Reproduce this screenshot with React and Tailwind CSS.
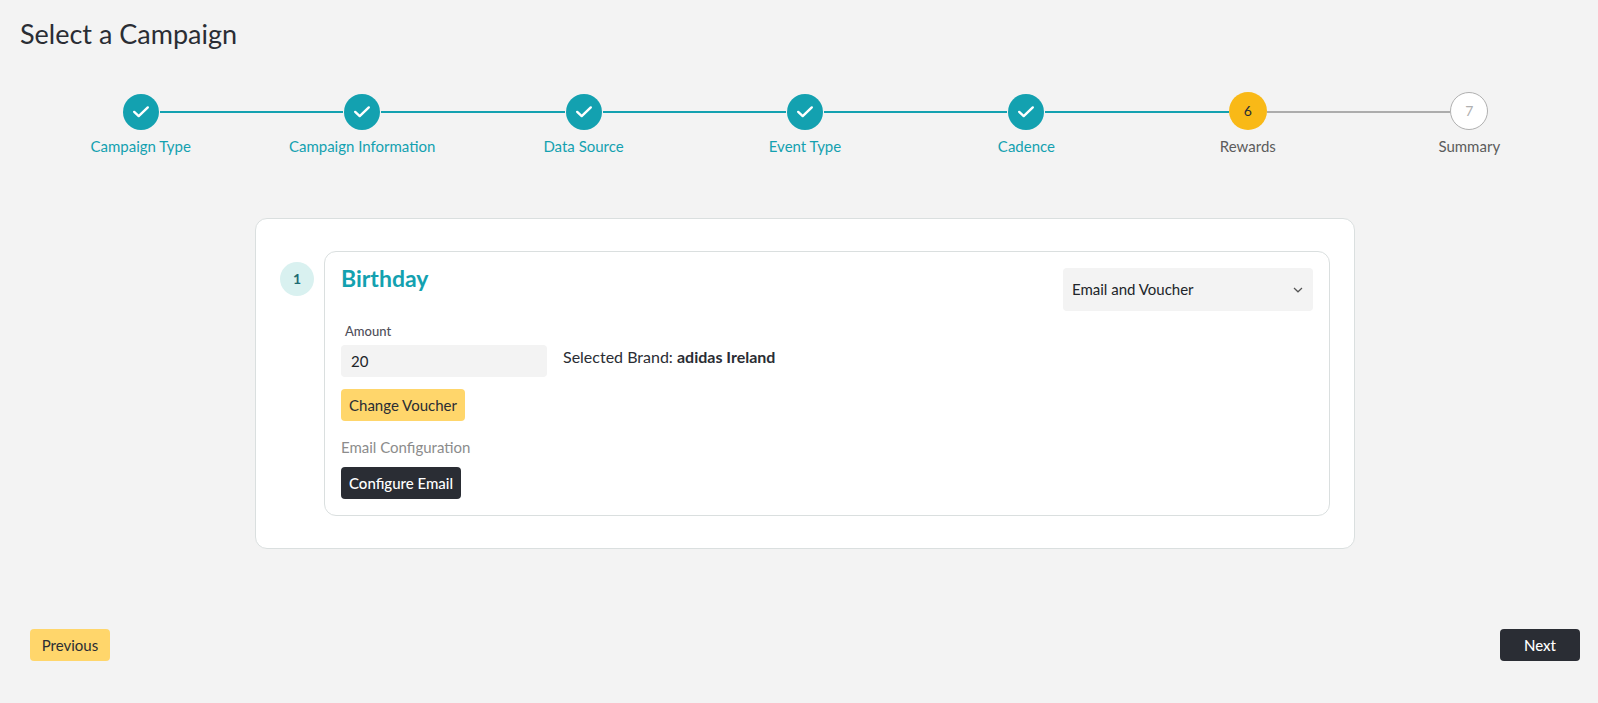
import React, { useState } from 'react';

const steps = [
  'Campaign Type',
  'Campaign Information',
  'Data Source',
  'Event Type',
  'Cadence',
  'Rewards',
  'Summary',
];

const lineColor = (shown, done) => {
  if (!shown) return 'bg-transparent';
  return done ? 'bg-[#13a1b0]' : 'bg-[#acacac]';
};

const StepCircle = ({ number, current }) => {
  if (number < current) {
    return (
      <span className="mx-px flex h-9 w-9 items-center justify-center rounded-full bg-[#13a1b0]">
        <svg width="18" height="14" viewBox="0 0 18 14" fill="none" stroke="#fff" strokeWidth="2.4" strokeLinecap="round" strokeLinejoin="round">
          <path d="M2.2 6.9 L6.7 11.1 L15.8 2.4" />
        </svg>
      </span>
    );
  }
  if (number === current) {
    return (
      <span className="flex h-[38px] w-[38px] items-center justify-center self-start rounded-full bg-[#f9b917] text-sm text-[#2a2d34]">
        {number}
      </span>
    );
  }
  return (
    <span className="flex h-[38px] w-[38px] items-center justify-center self-start rounded-full border border-[#b0b0b0] bg-white text-sm text-[#b0b0b0]">
      {number}
    </span>
  );
};

const Stepper = ({ current }) => (
  <ol className="grid grid-cols-7">
    {steps.map((label, i) => {
      const number = i + 1;
      const done = number < current;
      return (
        <li key={label} className="flex flex-col items-center">
          <div className="flex h-10 w-full items-center">
            <span className={`h-[2px] flex-1 ${lineColor(i > 0, number <= current)}`} />
            <StepCircle number={number} current={current} />
            <span className={`h-[2px] flex-1 ${lineColor(number < steps.length, done)}`} />
          </div>
          <span className={`mt-1 text-[15px] leading-5 ${done ? 'text-[#13a1b0]' : 'text-[#5c5c5c]'}`}>
            {label}
          </span>
        </li>
      );
    })}
  </ol>
);

const App = () => {
  const [amount, setAmount] = useState('20');
  const [reward, setReward] = useState('Email and Voucher');

  return (
    <div className="min-h-screen bg-[#f3f3f3] pt-4 pr-[18px] pb-10 font-['Lato',sans-serif] text-[#2a2d34]">
      <h1 className="pl-5 text-[27px] leading-9">Select a Campaign</h1>

      <main className="pt-10 pl-[30px]">
        <Stepper current={6} />

        <section className="mx-auto mt-[62px] flex max-w-[1100px] gap-[10px] rounded-xl border border-[#dadfdf] bg-white px-6 py-8">
          <span className="mt-[11px] flex h-[34px] w-[34px] shrink-0 items-center justify-center rounded-full bg-[#d9f1f0] text-sm font-bold text-[#1c6b72]">
            1
          </span>

          <div className="flex-1 rounded-xl border border-[#dadfdf] p-4">
            <div className="flex items-start justify-between">
              <h2 className="text-[23px] leading-5 font-bold text-[#13a1b0]">Birthday</h2>
              <div className="grid w-[250px] items-center">
                <select
                  aria-label="Reward type"
                  value={reward}
                  onChange={(e) => setReward(e.target.value)}
                  className="col-start-1 row-start-1 h-[43px] appearance-none rounded bg-[#f3f3f3] px-[9px] text-[15px] text-[#212529]"
                >
                  <option>Email and Voucher</option>
                  <option>Email</option>
                  <option>Voucher</option>
                </select>
                <svg className="pointer-events-none col-start-1 row-start-1 mr-[10px] justify-self-end" width="10" height="6" viewBox="0 0 10 6" fill="none" stroke="#555" strokeWidth="1.2">
                  <path d="M1 1 L5 4.8 L9 1" />
                </svg>
              </div>
            </div>

            <div className="mt-3 flex items-end gap-4">
              <div className="flex w-[206px] flex-col gap-[6px]">
                <label htmlFor="amount" className="pl-1 text-[13px] leading-4 font-medium text-[#4f4f5a]">
                  Amount
                </label>
                <input
                  id="amount"
                  type="text"
                  value={amount}
                  onChange={(e) => setAmount(e.target.value)}
                  className="h-8 rounded bg-[#f3f3f3] px-[10px] text-[15px] text-[#212529]"
                />
              </div>
              <p className="pb-2 text-base leading-6">
                Selected Brand: <strong className="font-bold">adidas Ireland</strong>
              </p>
            </div>

            <button type="button" className="mt-3 block h-8 rounded bg-[#ffd66b] px-2 text-[15px]">
              Change Voucher
            </button>
            <p className="mt-4 text-[15px] leading-5 text-[#8c8c8c]">Email Configuration</p>
            <button type="button" className="mt-[10px] block h-8 rounded bg-[#2a2d34] px-2 text-[15px] font-medium text-white">
              Configure Email
            </button>
          </div>
        </section>

        <div className="mt-20 flex justify-between">
          <button type="button" className="h-8 w-20 rounded bg-[#ffd66b] text-[15px]">
            Previous
          </button>
          <button type="button" className="h-8 w-20 rounded bg-[#2a2d34] text-[15px] font-medium text-white">
            Next
          </button>
        </div>
      </main>
    </div>
  );
};

export default App;
